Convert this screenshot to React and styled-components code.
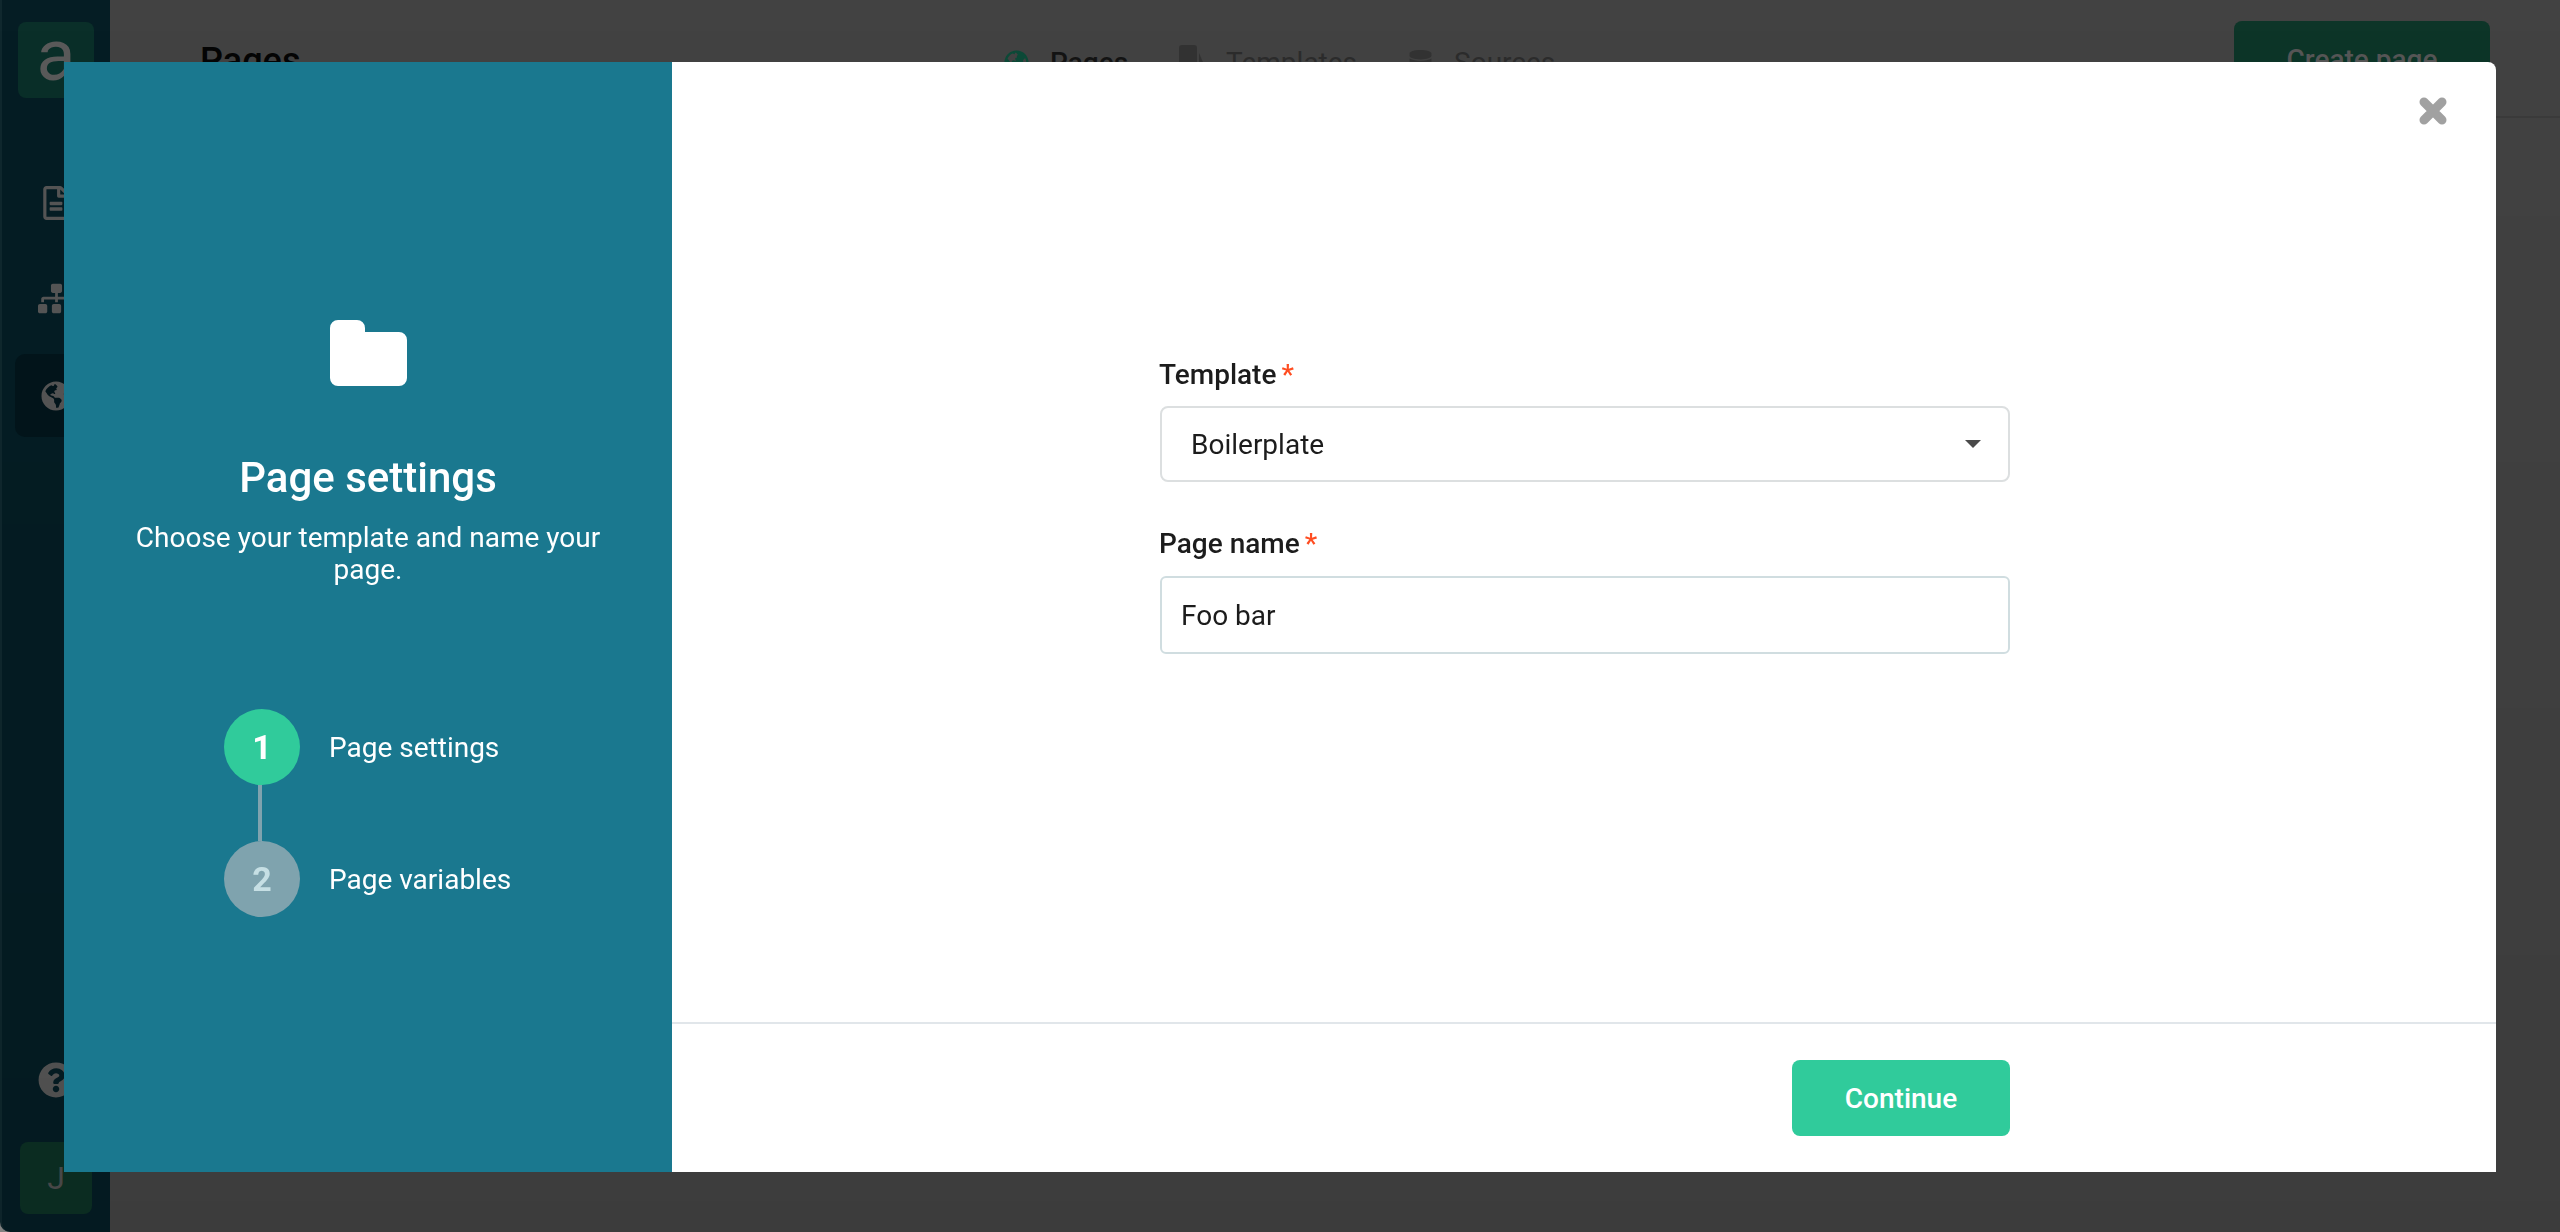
import React from "react";
import styled, { createGlobalStyle } from "styled-components";
import {
  FaDatabase,
  FaGlobeAmericas,
  FaQuestionCircle,
  FaRegFileAlt,
  FaSitemap,
} from "react-icons/fa";

const GlobalStyle = createGlobalStyle`
    html, body {
        margin: 0;
        padding: 0;
        height: 100%;
        background: #8d8d8d;
        font-family: Roboto, "Liberation Sans", sans-serif;
        overflow: hidden;
    }
    * {
        box-sizing: border-box;
    }
`;

/* the page behind the dialog, colours are the dimmed ones */
const Page = styled.div`
    display: flex;
    height: 100vh;
`;
const Sidebar = styled.aside`
    width: 110px;
    flex-shrink: 0;
    display: flex;
    flex-direction: column;
    align-items: center;
    padding: 22px 0 18px;
    background: #051d24;
    border-left: 2px solid #10282e;
    border-bottom-left-radius: 10px;
    color: #565656;
`;
const Logo = styled.div`
    width: 76px;
    height: 76px;
    border-radius: 8px;
    background: #0a2f29;
    display: flex;
    align-items: center;
    justify-content: center;
    font-size: 72px;
    line-height: 72px;
    padding-bottom: 8px;
    color: #5a5a5a;
`;
const SideIcon = styled.div`
    display: flex;
    justify-content: center;
    margin-top: ${props => props.top}px;
`;
const ActiveItem = styled.div`
    width: 82px;
    height: 83px;
    margin-top: 37px;
    border-radius: 10px;
    background: #03151b;
    display: flex;
    align-items: center;
    justify-content: center;
`;
const HelpIcon = styled.div`
    margin-top: auto;
    display: flex;
`;
const Avatar = styled.div`
    width: 72px;
    height: 72px;
    margin-top: 44px;
    border-radius: 8px;
    background: #0c3024;
    color: #4d4d4d;
    font-size: 32px;
    display: flex;
    align-items: center;
    justify-content: center;
`;
const Main = styled.main`
    flex: 1;
    background: #424242;
`;
const Header = styled.header`
    height: 118px;
    display: grid;
    grid-template-columns: 894px auto 1fr;
    align-items: center;
    padding-right: 70px;
    border-bottom: 2px solid #3b3b3b;
`;
const PageTitle = styled.h1`
    margin: 5px 0 0 90px;
    font-size: 36px;
    font-weight: 500;
    color: #050505;
`;
const TopNav = styled.nav`
    display: flex;
    gap: 51px;
    margin-top: 9px;
`;
const NavItem = styled.div`
    display: flex;
    align-items: center;
    gap: 21px;
    font-size: 28px;
    font-weight: ${props => (props.active ? 500 : 400)};
    color: ${props => (props.active ? "#141414" : "#2c2c2c")};
`;
const CreateButton = styled.div`
    justify-self: end;
    width: 256px;
    height: 76px;
    margin-top: 2px;
    border-radius: 8px;
    background: #0d3528;
    color: #565656;
    font-size: 28px;
    font-weight: 500;
    display: flex;
    align-items: center;
    justify-content: center;
`;

/* dialog */
const Overlay = styled.div`
    position: fixed;
    inset: 0;
    padding: 62px 64px 60px;
    background: linear-gradient(rgba(0, 0, 0, 0), rgba(0, 0, 0, 0.08));
    display: flex;
`;
const Modal = styled.div`
    position: relative;
    flex: 1;
    display: flex;
    background: #fff;
    border-radius: 0 8px 0 0;
`;
const CloseButton = styled.div`
    position: absolute;
    top: 35px;
    right: 49px;
    display: flex;
`;
const StepsPanel = styled.div`
    width: 608px;
    flex-shrink: 0;
    display: flex;
    flex-direction: column;
    align-items: center;
    padding: 258px 64px 0;
    background: #1a788f;
    color: #fff;
`;
const PanelTitle = styled.h2`
    margin: 68px 0 0;
    font-size: 42px;
    line-height: 48px;
    font-weight: 500;
`;
const PanelText = styled.p`
    margin: 20px 0 0;
    font-size: 28px;
    line-height: 32px;
    text-align: center;
`;
const Steps = styled.div`
    align-self: flex-start;
    margin: 123px 0 0 96px;
    display: flex;
    flex-direction: column;
`;
const Step = styled.div`
    display: flex;
    align-items: center;
    gap: 29px;
    font-size: 28px;
`;
const StepNumber = styled.div`
    width: 76px;
    height: 76px;
    border-radius: 50%;
    display: flex;
    align-items: center;
    justify-content: center;
    font-size: 34px;
    font-weight: 700;
    background: ${props => (props.current ? "#30cb9b" : "#7fa3ae")};
    color: ${props => (props.current ? "#fff" : "#c6dfe4")};
`;
const StepLine = styled.div`
    width: 4px;
    height: 56px;
    margin-left: 34px;
    background: #7fa3ae;
`;
const Content = styled.div`
    flex: 1;
    display: flex;
    flex-direction: column;
`;
const Form = styled.form`
    flex: 1;
    width: 850px;
    margin-left: 488px;
    padding-top: 296px;
`;
const Label = styled.label`
    display: block;
    height: 34px;
    margin-left: -1px;
    font-size: 28px;
    line-height: 34px;
    font-weight: 500;
    color: #1c1c1c;
    margin-top: ${props => props.top || 0}px;
`;
const Required = styled.span`
    margin-left: 5px;
    color: #ff4d21;
`;
const SelectBox = styled.div`
    height: 76px;
    margin-top: 14px;
    padding: 0 27px 0 29px;
    border: 2px solid #dcdfe0;
    border-radius: 8px;
    display: flex;
    align-items: center;
    justify-content: space-between;
    font-size: 28px;
    color: #1c1c1c;
`;
const Caret = styled.span`
    width: 0;
    height: 0;
    border-left: 8px solid transparent;
    border-right: 8px solid transparent;
    border-top: 8px solid #4a4a4a;
`;
const TextInput = styled.input`
    display: block;
    width: 100%;
    height: 78px;
    margin-top: 15px;
    padding: 0 19px;
    border: 2px solid #d0dde0;
    border-radius: 6px;
    outline: none;
    font-family: inherit;
    font-size: 28px;
    color: #1c1c1c;
`;
const Footer = styled.div`
    height: 150px;
    flex-shrink: 0;
    border-top: 2px solid #e1e6ea;
    padding: 36px 0 0 488px;
`;
const ContinueBar = styled.div`
    width: 850px;
    display: flex;
    justify-content: flex-end;
`;
const ContinueButton = styled.button`
    width: 218px;
    height: 76px;
    border: none;
    border-radius: 8px;
    background: #30cb9b;
    color: #fff;
    font-family: inherit;
    font-size: 28px;
    font-weight: 500;
`;

const FolderIcon = () => (
    <svg width="77" height="66" viewBox="0 0 77 66" fill="#fff">
        <path d="M8 0h19a8 8 0 0 1 8 8v4h34a8 8 0 0 1 8 8v38a8 8 0 0 1-8 8H8a8 8 0 0 1-8-8V8a8 8 0 0 1 8-8z" />
    </svg>
);

const TemplateIcon = () => (
    <svg width="26" height="36" viewBox="0 0 26 36" fill="#333">
        <rect x="0" y="0" width="18" height="36" rx="3" />
        <path d="M20 8l6 14v14h-6z" />
    </svg>
);

const CloseIcon = () => (
    <svg width="28" height="28" viewBox="0 0 28 28" stroke="#a1a1a1" strokeWidth="9" strokeLinecap="round">
        <path d="M5 5l18 18M23 5L5 23" />
    </svg>
);

const App = () => {
    return (
        <>
            <GlobalStyle />
            <Page>
                <Sidebar>
                    <Logo>a</Logo>
                    <SideIcon top={88}><FaRegFileAlt size={34} /></SideIcon>
                    <SideIcon top={60}><FaSitemap size={37} /></SideIcon>
                    <ActiveItem><FaGlobeAmericas size={30} /></ActiveItem>
                    <HelpIcon><FaQuestionCircle size={36} /></HelpIcon>
                    <Avatar>J</Avatar>
                </Sidebar>
                <Main>
                    <Header>
                        <PageTitle>Pages</PageTitle>
                        <TopNav>
                            <NavItem active>
                                <FaGlobeAmericas size={25} color="#0d4a38" />
                                Pages
                            </NavItem>
                            <NavItem>
                                <TemplateIcon />
                                Templates
                            </NavItem>
                            <NavItem>
                                <FaDatabase size={25} color="#333" />
                                Sources
                            </NavItem>
                        </TopNav>
                        <CreateButton>Create page</CreateButton>
                    </Header>
                </Main>
            </Page>
            <Overlay>
                <Modal>
                    <CloseButton><CloseIcon /></CloseButton>
                    <StepsPanel>
                        <FolderIcon />
                        <PanelTitle>Page settings</PanelTitle>
                        <PanelText>Choose your template and name your page.</PanelText>
                        <Steps>
                            <Step>
                                <StepNumber current>1</StepNumber>
                                Page settings
                            </Step>
                            <StepLine />
                            <Step>
                                <StepNumber>2</StepNumber>
                                Page variables
                            </Step>
                        </Steps>
                    </StepsPanel>
                    <Content>
                        <Form>
                            <Label>Template<Required>*</Required></Label>
                            <SelectBox>
                                Boilerplate
                                <Caret />
                            </SelectBox>
                            <Label top={45}>Page name<Required>*</Required></Label>
                            <TextInput defaultValue="Foo bar" />
                        </Form>
                        <Footer>
                            <ContinueBar>
                                <ContinueButton>Continue</ContinueButton>
                            </ContinueBar>
                        </Footer>
                    </Content>
                </Modal>
            </Overlay>
        </>
    );
};

export default App;
